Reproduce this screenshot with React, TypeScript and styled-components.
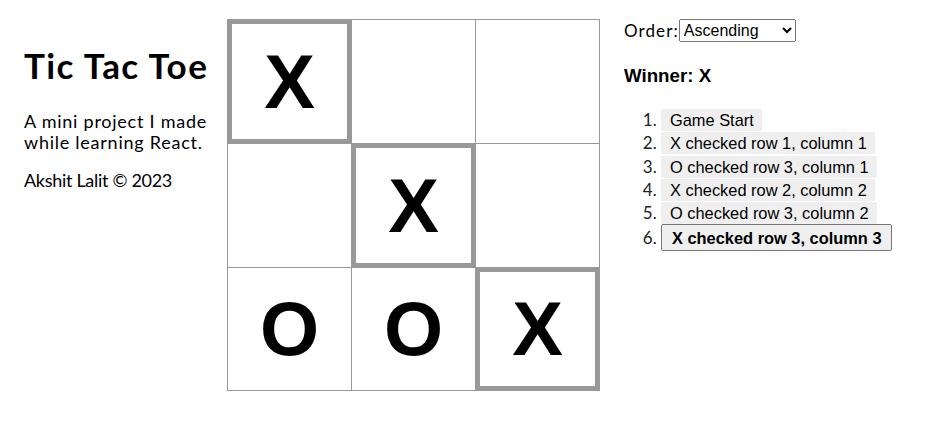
import React, { useState } from "react";
import styled, { createGlobalStyle } from "styled-components";

const GlobalStyle = createGlobalStyle`
  body {
    margin: 8px;
    background: #ffffff;
    color: #000000;
    font-family: "Century Gothic", Lato, "Liberation Sans", sans-serif;
  }
`;

const Game = styled.div`
  display: flex;
  align-items: flex-start;
  padding-top: 11px;
`;

const Info = styled.div`
  width: 195px;
  padding-left: 16px;
  margin-right: 8px;
  padding-top: 25px;
`;

const Title = styled.h1`
  margin: 0 0 25px;
  font-size: 35px;
  line-height: 42px;
  font-weight: 700;
  letter-spacing: 1.4px;
`;

const Blurb = styled.p<{ $spacing: number }>`
  margin: 0 0 18px;
  font-size: 18px;
  line-height: 20.7px;
  letter-spacing: ${({ $spacing }) => $spacing}px;
`;

const Board = styled.div`
  display: grid;
  grid-template-columns: 124px 124px 124px;
  grid-template-rows: 124px 124px 123px;
  border-top: 1px solid #999999;
  border-left: 1px solid #999999;
`;

const Square = styled.button<{ $win: boolean }>`
  box-sizing: border-box;
  margin: 0;
  padding: 0;
  background: #ffffff;
  border: none;
  border-right: 1px solid #999999;
  border-bottom: 1px solid #999999;
  box-shadow: ${({ $win }) => ($win ? "inset 0 0 0 4px #999999" : "none")};
  font-family: "Liberation Sans", Arial, sans-serif;
  font-weight: 700;
  font-size: 76px;
  line-height: 1;
  color: #000000;
  display: flex;
  align-items: center;
  justify-content: center;
  cursor: pointer;
`;

const Side = styled.div`
  margin-left: 24px;
`;

const OrderRow = styled.label`
  display: flex;
  align-items: center;
  font-size: 17px;
  letter-spacing: 1.1px;
  height: 23px;
`;

const Select = styled.select`
  font-family: "Liberation Sans", Arial, sans-serif;
  font-size: 16px;
  letter-spacing: 0;
  width: 117px;
  height: 23px;
  margin-left: 0;
  color: #000000;
`;

const Status = styled.h3`
  margin: 23px 0 0;
  font-family: "Liberation Sans", Arial, sans-serif;
  font-size: 18.72px;
  line-height: 22px;
  font-weight: 700;
`;

const Moves = styled.ol`
  margin: 21px 0 0;
  padding-left: 37px;
  font-size: 17px;
  li {
    height: 23.3px;
    line-height: 23.3px;
  }
  li::marker {
    color: #222222;
  }
`;

const MoveButton = styled.button<{ $current: boolean }>`
  font-family: "Liberation Sans", Arial, sans-serif;
  font-size: 16.4px;
  font-weight: ${({ $current }) => ($current ? 700 : 400)};
  color: #000000;
  background: #efefef;
  border: ${({ $current }) => ($current ? "1px solid #767676" : "none")};
  border-radius: ${({ $current }) => ($current ? "2px" : "0")};
  padding: ${({ $current }) => ($current ? "4px 9px 3px 10px" : "2px 8px 2px 9px")};
  line-height: 18px;
  cursor: pointer;
`;

const squares = ["X", "", "", "", "X", "", "O", "O", "X"];
const winLine = [0, 4, 8];

const moves = [
  "Game Start",
  "X checked row 1, column 1",
  "O checked row 3, column 1",
  "X checked row 2, column 2",
  "O checked row 3, column 2",
  "X checked row 3, column 3",
];

export default function App() {
  const [order, setOrder] = useState("asc");
  const list = order === "asc" ? moves : [...moves].reverse();

  return (
    <>
      <GlobalStyle />
      <Game>
        <Info>
          <Title>Tic Tac Toe</Title>
          <Blurb $spacing={0.75}>A mini project I made while learning React.</Blurb>
          <Blurb $spacing={-0.3}>Akshit Lalit © 2023</Blurb>
        </Info>
        <Board>
          {squares.map((value, i) => (
            <Square key={i} $win={winLine.includes(i)}>
              {value}
            </Square>
          ))}
        </Board>
        <Side>
          <OrderRow>
            Order:
            <Select value={order} onChange={(e) => setOrder(e.target.value)}>
              <option value="asc">Ascending</option>
              <option value="desc">Descending</option>
            </Select>
          </OrderRow>
          <Status>Winner: X</Status>
          <Moves>
            {list.map((move) => (
              <li key={move}>
                <MoveButton $current={move === moves[moves.length - 1]}>
                  {move}
                </MoveButton>
              </li>
            ))}
          </Moves>
        </Side>
      </Game>
    </>
  );
}
